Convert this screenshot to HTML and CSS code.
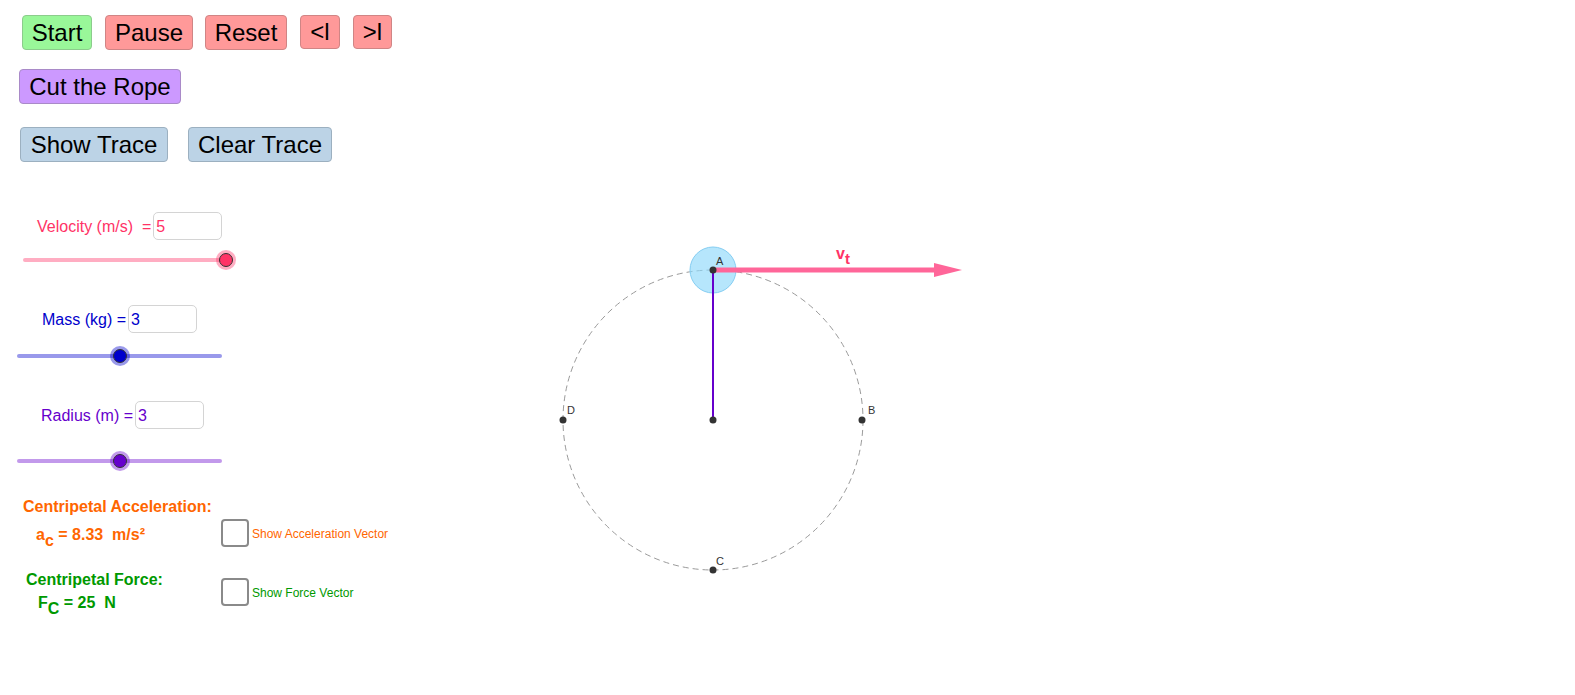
FILE: index.html
```html
<!DOCTYPE html>
<html lang="en">
<head>
    <meta charset="UTF-8">
    <title>Circular Motion</title>
    <link rel="stylesheet" href="styles.css">
</head>
<body>
    <div class="applet">
        <div class="controls">
            <div class="btn-row row-play">
                <button class="btn btn-green w-start">Start</button>
                <button class="btn btn-red w-pause">Pause</button>
                <button class="btn btn-red w-reset">Reset</button>
                <button class="btn btn-red btn-small w-back">&lt;l</button>
                <button class="btn btn-red btn-small w-fwd">&gt;l</button>
            </div>
            <div class="btn-row row-cut">
                <button class="btn btn-purple w-cut">Cut the Rope</button>
            </div>
            <div class="btn-row row-trace">
                <button class="btn btn-blue w-show">Show Trace</button>
                <button class="btn btn-blue w-clear">Clear Trace</button>
            </div>

            <div class="slider-block velocity">
                <div class="slider-label">
                    <span>Velocity (m/s)&nbsp;&nbsp;=</span>
                    <div class="num-box">5</div>
                </div>
                <div class="track"><span class="knob" style="left: 100%"></span></div>
            </div>

            <div class="slider-block mass">
                <div class="slider-label">
                    <span>Mass (kg) =</span>
                    <div class="num-box">3</div>
                </div>
                <div class="track"><span class="knob" style="left: 50%"></span></div>
            </div>

            <div class="slider-block radius">
                <div class="slider-label">
                    <span>Radius (m) =</span>
                    <div class="num-box">3</div>
                </div>
                <div class="track"><span class="knob" style="left: 50%"></span></div>
            </div>

            <div class="result accel">
                <div class="result-title">Centripetal Acceleration:</div>
                <div class="result-row">
                    <div class="formula">a<sub>c</sub> = 8.33&nbsp; m/s²</div>
                    <span class="check"></span>
                    <span class="check-label">Show Acceleration Vector</span>
                </div>
            </div>

            <div class="result force">
                <div class="result-row">
                    <div class="result-col">
                        <div class="result-title">Centripetal Force:</div>
                        <div class="formula">F<sub>C</sub> = 25&nbsp; N</div>
                    </div>
                    <span class="check"></span>
                    <span class="check-label">Show Force Vector</span>
                </div>
            </div>
        </div>

        <svg class="diagram" viewBox="400 0 1175 695" width="1175" height="695">
            <circle cx="713" cy="420" r="150" fill="none" stroke="#9a9a9a" stroke-width="1" stroke-dasharray="6 4"/>
            <circle cx="713" cy="270" r="23" fill="#8fd8fa" fill-opacity="0.65" stroke="#84cdf2" stroke-width="1"/>
            <line x1="713" y1="270" x2="713" y2="420" stroke="#6600cc" stroke-width="2"/>
            <line x1="715" y1="270" x2="937" y2="270" stroke="#ff6699" stroke-width="5"/>
            <polygon points="934,263 962,270 934,277" fill="#ff6699"/>
            <text class="vec-label" x="836" y="259">v<tspan class="vec-sub" dy="5">t</tspan></text>
            <g fill="#333">
                <circle cx="713" cy="270" r="3.5"/>
                <circle cx="862" cy="420" r="3.5"/>
                <circle cx="713" cy="570" r="3.5"/>
                <circle cx="563" cy="420" r="3.5"/>
                <circle cx="713" cy="420" r="3.5"/>
            </g>
            <g class="pt-label">
                <text x="716" y="265">A</text>
                <text x="868" y="414">B</text>
                <text x="716" y="565">C</text>
                <text x="567" y="414">D</text>
            </g>
        </svg>
    </div>
</body>
</html>
```

FILE: styles.css
```css
html, body {
    overflow: hidden;
}

body {
    margin: 0;
    padding: 0;
    background-color: #fff;
    font-family: "Liberation Sans", Arial, sans-serif;
}

.applet {
    display: flex;
    width: 1575px;
    height: 695px;
    overflow: hidden;
}

.controls {
    width: 400px;
    flex-shrink: 0;
    padding-top: 15px;
}

.btn-row {
    display: flex;
}

.row-play {
    padding-left: 22px;
}

.row-cut {
    margin-top: 19px;
    padding-left: 19px;
}

.row-trace {
    margin-top: 23px;
    padding-left: 20px;
    gap: 20px;
}

.btn {
    height: 35px;
    padding: 0;
    font-family: "Liberation Sans", Arial, sans-serif;
    font-size: 24px;
    color: #000;
    border: 1px solid #a0a0a0;
    border-radius: 4px;
    text-align: center;
    cursor: pointer;
}

.btn-small {
    height: 34px;
}

.btn-green {
    background-color: #99f799;
    border-color: #8ccc8c;
}

.btn-red {
    background-color: #ff9999;
    border-color: #d08585;
}

.btn-purple {
    background-color: #cc99ff;
    border-color: #a98ac8;
}

.btn-blue {
    background-color: #bcd3e6;
    border-color: #9cb0c0;
}

.w-start { width: 70px; }
.w-pause { width: 88px; margin-left: 13px; }
.w-reset { width: 82px; margin-left: 12px; }
.w-back { width: 40px; margin-left: 13px; }
.w-fwd { width: 39px; margin-left: 13px; }
.w-cut { width: 162px; }
.w-show { width: 148px; }
.w-clear { width: 144px; }

/* sliders */
.slider-block {
    font-size: 16px;
}

.slider-label {
    display: flex;
    align-items: center;
}

.slider-label span {
    padding-top: 2px;
}

.num-box {
    width: 65px;
    height: 26px;
    margin-left: 2px;
    border: 1px solid #d4d4d4;
    border-radius: 5px;
    background-color: #fff;
    line-height: 28px;
    padding-left: 2px;
    box-sizing: content-box;
}

.track {
    position: relative;
    height: 4px;
    border-radius: 2px;
}

.knob {
    position: absolute;
    top: 50%;
    width: 12px;
    height: 12px;
    margin-left: -7px;
    margin-top: -7px;
    border-radius: 50%;
    border: 1px solid #333;
}

.velocity {
    margin-top: 50px;
    color: #ff3366;
}

.velocity .slider-label {
    padding-left: 37px;
}

.velocity .track {
    margin-top: 18px;
    margin-left: 23px;
    width: 203px;
    background-color: #ffadc2;
}

.velocity .knob {
    background-color: #ff3366;
    box-shadow: 0 0 0 3px rgba(255, 51, 102, 0.4);
}

.mass {
    margin-top: 43px;
    color: #0000cc;
}

.mass .slider-label {
    padding-left: 42px;
}

.mass .track {
    margin-top: 21px;
    margin-left: 17px;
    width: 205px;
    background-color: #9999eb;
}

.mass .knob {
    background-color: #0000cc;
    box-shadow: 0 0 0 3px rgba(0, 0, 204, 0.4);
}

.radius {
    margin-top: 43px;
    color: #6600cc;
}

.radius .slider-label {
    padding-left: 41px;
}

.radius .track {
    margin-top: 30px;
    margin-left: 17px;
    width: 205px;
    background-color: #c299eb;
}

.radius .knob {
    background-color: #6600cc;
    box-shadow: 0 0 0 3px rgba(102, 0, 204, 0.4);
}

/* results */
.result {
    font-weight: bold;
    font-size: 16px;
}

.result-title {
    line-height: 18px;
}

.result-row {
    display: flex;
    align-items: center;
}

.formula {
    line-height: 20px;
}

.formula sub {
    font-size: 16px;
    vertical-align: -6px;
    line-height: 0;
}

.check {
    width: 24px;
    height: 24px;
    border: 2px solid #8a8a8a;
    border-radius: 4px;
    background-color: #fff;
    flex-shrink: 0;
}

.check-label {
    margin-left: 3px;
    padding-top: 2px;
    font-size: 12px;
    font-weight: normal;
}

.accel {
    margin-top: 35px;
    color: #ff6600;
}

.accel .result-title {
    padding-left: 23px;
}

.accel .result-row {
    margin-top: 3px;
}

.accel .formula {
    width: 185px;
    padding-left: 36px;
    padding-top: 4px;
}

.force {
    margin-top: 24px;
    color: #009900;
}

.force .result-col {
    width: 221px;
}

.force .result-title {
    padding-left: 26px;
}

.force .formula {
    padding-left: 38px;
    margin-top: 4px;
}

/* diagram */
.diagram {
    display: block;
    flex-shrink: 0;
}

.pt-label text {
    font-family: "Liberation Sans", Arial, sans-serif;
    font-size: 11px;
    fill: #333;
}

.vec-label {
    font-family: "Liberation Sans", Arial, sans-serif;
    font-size: 16px;
    font-weight: bold;
    fill: #ff3366;
}

.vec-sub {
    font-size: 15px;
}
```
